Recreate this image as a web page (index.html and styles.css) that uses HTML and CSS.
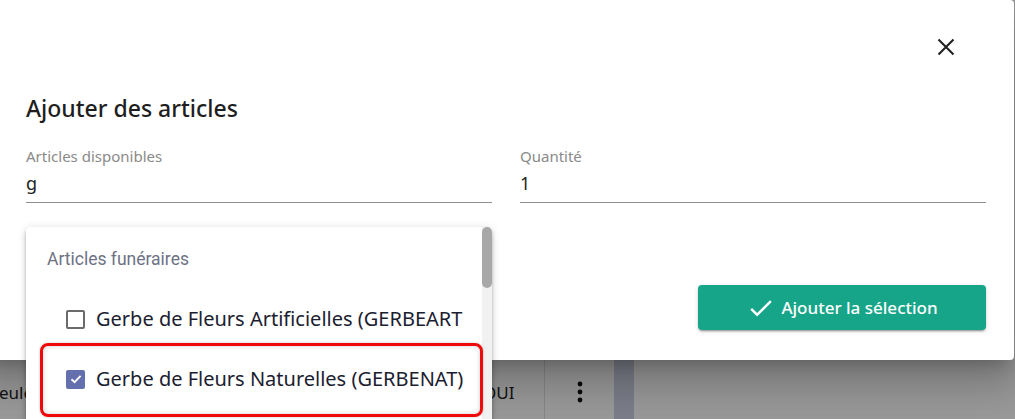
FILE: index.html
```html
<!DOCTYPE html>
<html lang="fr">
<head>
<meta charset="utf-8">
<title>Ajouter des articles</title>
<link rel="stylesheet" href="styles.css">
</head>
<body>
<div class="dialog">
  <div class="dlg-header">
    <button class="close" aria-label="Fermer">
      <svg width="18" height="18" viewBox="0 0 18 18"><path d="M1.5 1.5L16.5 16.5M16.5 1.5L1.5 16.5" stroke="#222" stroke-width="2.1" fill="none"/></svg>
    </button>
  </div>
  <h1 class="title">Ajouter des articles</h1>
  <div class="fields">
    <div class="field">
      <div class="label">Articles disponibles</div>
      <div class="input">g</div>
    </div>
    <div class="field">
      <div class="label">Quantité</div>
      <div class="input">1</div>
    </div>
  </div>
  <div class="actions">
    <div class="spacer"></div>
    <div class="act-col">
      <button class="btn-add">
        <svg width="22" height="17" viewBox="3.2 5.4 18 14"><path d="M9 16.17L4.83 12l-1.42 1.41L9 19 21 7l-1.41-1.41z" fill="#fff"/></svg>
        <span>Ajouter la sélection</span>
      </button>
    </div>
  </div>

  <div class="dropdown">
    <div class="dd-content">
      <div class="dd-sub">Articles funéraires</div>
      <div class="dd-item">
        <span class="cb"></span>
        <span class="dd-text">Gerbe de Fleurs Artificielles (GERBEART</span>
      </div>
      <div class="dd-item">
        <span class="cb cb-on"><svg width="14" height="14" viewBox="0 0 14 14"><path d="M2.5 7.3L5.6 10.2L11.6 3.9" stroke="#fff" stroke-width="1.9" fill="none"/></svg></span>
        <span class="dd-text">Gerbe de Fleurs Naturelles (GERBENAT)</span>
      </div>
    </div>
    <div class="dd-scroll"><div class="dd-thumb"></div></div>
    <div class="highlight"></div>
  </div>
</div>

<div class="row">
  <div class="cell c-name">eule</div>
  <div class="cell c-flag">OUI</div>
  <div class="cell c-menu">
    <svg width="6" height="22" viewBox="0 0 6 22"><circle cx="3" cy="3" r="2.4" fill="#111"/><circle cx="3" cy="11" r="2.4" fill="#111"/><circle cx="3" cy="19" r="2.4" fill="#111"/></svg>
  </div>
  <div class="cell c-band"></div>
  <div class="cell c-rest"></div>
</div>
<div class="overlay"></div>
</body>
</html>
```

FILE: styles.css
```css
html, body {
  margin: 0;
  padding: 0;
}
body {
  width: 1015px;
  height: 419px;
  overflow: hidden;
  background: #fff;
  font-family: "Noto Sans", "Open Sans", sans-serif;
  position: relative;
}

.dialog {
  position: relative;
  z-index: 2;
  box-sizing: border-box;
  margin-left: -24px;
  width: 1038px;
  height: 360px;
  padding: 0 28px 30px 50px;
  background: #fff;
  border-radius: 4px;
  box-shadow: 0 11px 15px -7px rgba(0,0,0,.2), 0 24px 38px 3px rgba(0,0,0,.14), 0 9px 46px 8px rgba(0,0,0,.12);
}

.dlg-header {
  height: 93px;
  display: flex;
  justify-content: flex-end;
  align-items: center;
  padding-right: 31px;
}
.close {
  border: 0;
  background: none;
  padding: 0;
  width: 18px;
  height: 18px;
  display: block;
  margin-top: 1px;
}
.close svg { display: block; }

.title {
  margin: 0;
  font-size: 23px;
  font-weight: 500;
  line-height: 30px;
  color: #1e1e1e;
}

.fields {
  margin-top: 23px;
  display: flex;
  gap: 28px;
}
.field {
  flex: 1;
}
.label {
  font-size: 15px;
  line-height: 20px;
  color: #8a8a8a;
}
.input {
  margin-top: 4px;
  font-size: 18px;
  line-height: 26px;
  color: #222;
  padding-bottom: 6px;
  border-bottom: 1px solid #8f8f8f;
}

.actions {
  margin-top: 82px;
  display: flex;
  gap: 28px;
}
.spacer { flex: 1; }
.act-col {
  flex: 1;
  display: flex;
  justify-content: flex-end;
}
.btn-add {
  width: 288px;
  height: 45px;
  border: 0;
  border-radius: 4px;
  background: #17a589;
  color: #fff;
  font-family: "Noto Sans", "Open Sans", sans-serif;
  font-size: 17px;
  font-weight: 500;
  display: flex;
  align-items: center;
  justify-content: center;
  gap: 9px;
  padding: 0 0 0 4px;
  box-shadow: 0 3px 1px -2px rgba(0,0,0,.2), 0 2px 2px 0 rgba(0,0,0,.14), 0 1px 5px 0 rgba(0,0,0,.12);
}
.btn-add svg { display: block; margin-top: 1px; }

/* dropdown panel */
.dropdown {
  position: absolute;
  left: 50px;
  top: 227px;
  width: 466px;
  height: 200px;
  background: #fff;
  display: flex;
  border-radius: 4px 4px 0 0;
  box-shadow: 0 2px 4px -1px rgba(0,0,0,.2), 0 4px 5px 0 rgba(0,0,0,.14), 0 1px 10px 0 rgba(0,0,0,.12);
}
.dd-content {
  flex: 1;
  min-width: 0;
  overflow: hidden;
}
.dd-sub {
  padding: 20px 0 18px 21px;
  font-family: Roboto, sans-serif;
  font-size: 17.5px;
  line-height: 24px;
  color: #6d7285;
}
.dd-item {
  height: 60px;
  display: flex;
  align-items: center;
  padding-left: 40px;
  white-space: nowrap;
}
.cb {
  box-sizing: border-box;
  width: 19px;
  height: 19px;
  border: 2px solid #6b6b6b;
  border-radius: 2px;
  flex: none;
  display: flex;
  align-items: center;
  justify-content: center;
}
.cb-on {
  border: 0;
  background: #6370ad;
}
.cb-on svg { display: block; }
.dd-text {
  margin-left: 11px;
  font-size: 20px;
  line-height: 28px;
  color: #1b2030;
}
.dd-scroll {
  width: 10px;
  flex: none;
  background: #f1f1f1;
  border-radius: 0 4px 0 0;
}
.dd-thumb {
  height: 61px;
  border-radius: 5px;
  background: #a8a8a8;
}
.highlight {
  position: absolute;
  left: 14px;
  top: 116px;
  width: 443px;
  height: 74px;
  box-sizing: border-box;
  border: 3px solid #ee0a0a;
  border-radius: 8px;
  box-shadow: inset 0 0 5px rgba(0,0,0,.18), 0 0 3px rgba(0,0,0,.2);
}

/* table row behind the overlay */
.row {
  display: flex;
  height: 59px;
  background: #fff;
  font-family: "Noto Sans", "Open Sans", sans-serif;
  font-size: 17px;
  color: #222;
}
.cell {
  display: flex;
  align-items: center;
  padding-top: 6px;
  box-sizing: border-box;
}
.c-name {
  width: 484px;
  margin-left: -1px;
}
.c-flag {
  width: 62px;
  border-right: 1px solid #e2e2e2;
}
.c-menu {
  width: 69px;
  justify-content: center;
  padding-top: 4px;
}
.c-band {
  width: 20px;
  background: #cdd1e4;
}
.c-rest { flex: 1; }

.overlay {
  position: absolute;
  inset: 0;
  z-index: 1;
  background: rgba(0,0,0,.4);
}
```
